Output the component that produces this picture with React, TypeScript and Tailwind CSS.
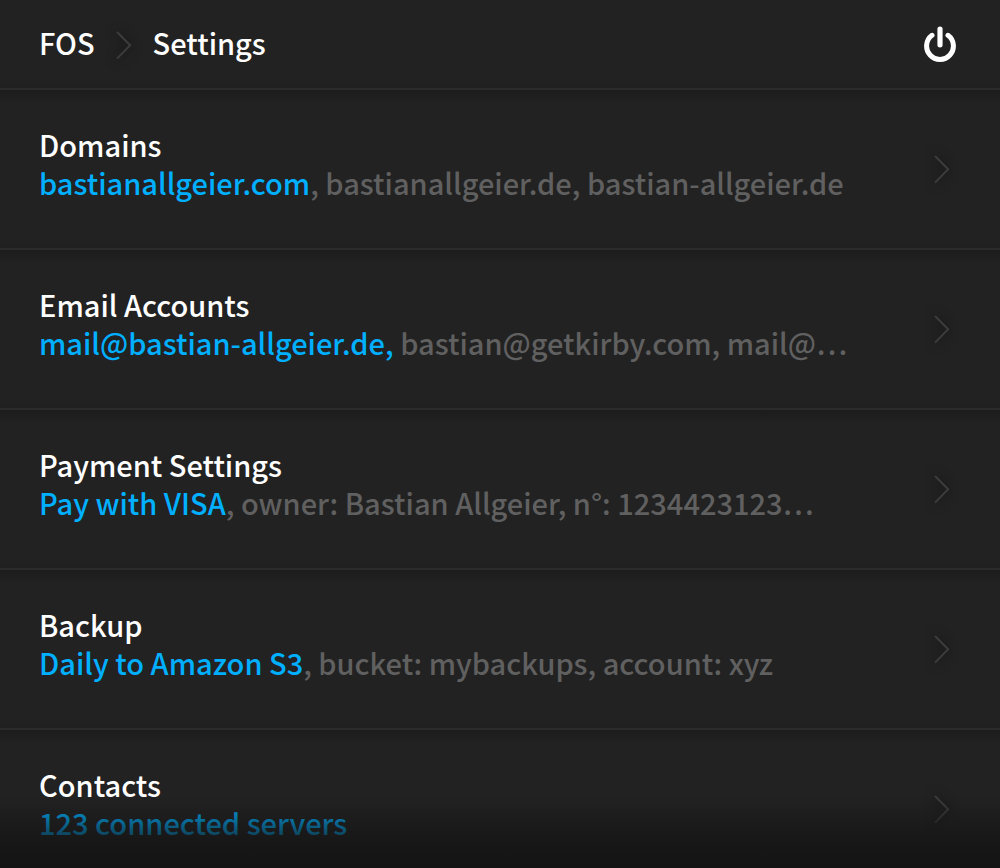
import React from "react";

type Entry = { title: string; primary: string; rest?: string };

const entries: Entry[] = [
  { title: "Domains", primary: "bastianallgeier.com", rest: ", bastianallgeier.de, bastian-allgeier.de" },
  { title: "Email Accounts", primary: "mail@bastian-allgeier.de,", rest: " bastian@getkirby.com, mail@…" },
  { title: "Payment Settings", primary: "Pay with VISA", rest: ", owner: Bastian Allgeier, n°: 1234423123…" },
  { title: "Backup", primary: "Daily to Amazon S3", rest: ", bucket: mybackups, account: xyz" },
  { title: "Contacts", primary: "123 connected servers" },
];

function Chevron() {
  return (
    <svg
      aria-hidden="true"
      width="16"
      height="28"
      viewBox="0 0 16 28"
      fill="none"
      className="shrink-0 overflow-visible stroke-[#3c3c3c] drop-shadow-[0_0_6px_rgba(0,0,0,0.7)]"
    >
      <path d="M1 1 L14.2 14.3 L1 27.6" strokeWidth="2" />
    </svg>
  );
}

function PowerIcon() {
  return (
    <svg aria-hidden="true" width="32" height="36" viewBox="0 0 32 36" fill="none" stroke="#fff" strokeLinecap="round">
      <path d="M16 3 V18.8" strokeWidth="5.2" />
      <path d="M8 9.3 A13.4 13.4 0 1 0 24 9.3" strokeWidth="5" />
    </svg>
  );
}

function Row({ title, primary, rest }: Entry) {
  return (
    <li>
      <a
        href="#"
        className="flex items-center justify-between border-b-2 border-[#2b2b2b] bg-[linear-gradient(to_bottom,#1c1c1c,#222222_14px,#222222_calc(100%-10px),#1f1f1f)] pr-[50px] pl-[39px]"
      >
        <div className="min-w-0 overflow-hidden pt-[35px] pb-[47px] whitespace-nowrap">
          <h2>{title}</h2>
          <p className="text-[#606060]">
            <span className="text-[#00b0ff]">{primary}</span>
            {rest}
          </p>
        </div>
        <Chevron />
      </a>
    </li>
  );
}

export default function App() {
  return (
    <div className="relative h-screen overflow-hidden bg-[#222222] font-['Noto_Sans_CJK_SC','Noto_Sans',sans-serif] text-[29px] leading-[38px] font-medium text-white">
      <header className="flex min-h-[90px] items-center justify-between border-b-2 border-[#2b2b2b] bg-[linear-gradient(to_bottom,#222222_calc(100%-10px),#1f1f1f)] pr-11 pl-[39px]">
        <nav aria-label="Breadcrumb" className="flex items-center pb-1">
          <a href="#">FOS</a>
          <span className="pt-[6px] pr-[21px] pl-[21px]">
            <Chevron />
          </span>
          <h1>Settings</h1>
        </nav>
        <button type="button" aria-label="Power off">
          <PowerIcon />
        </button>
      </header>
      <main>
        <ul>
          {entries.map((entry) => (
            <Row key={entry.title} {...entry} />
          ))}
        </ul>
      </main>
      <div className="pointer-events-none absolute inset-x-0 bottom-0 h-[72px] bg-linear-to-b from-[#141414]/0 via-[#141414]/75 via-60% to-[#141414]" />
    </div>
  );
}
